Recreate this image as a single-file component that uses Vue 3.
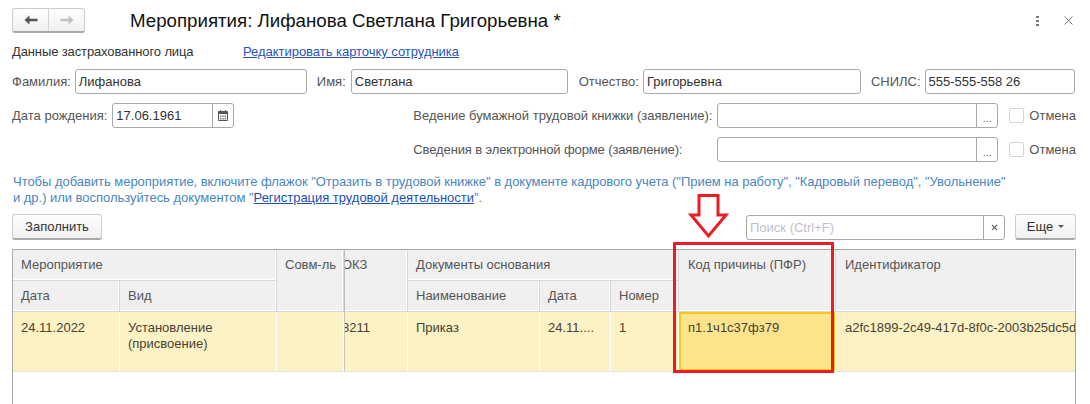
<template>
  <div class="page">
    <header class="top">
      <div class="nav">
        <button class="nav-btn"><svg width="14" height="10" viewBox="0 0 14 10"><path d="M0.5 5 L5.5 0.5 V3.7 H13.5 V6.3 H5.5 V9.5 Z" fill="#555"/></svg></button>
        <button class="nav-btn off"><svg width="14" height="10" viewBox="0 0 14 10"><path d="M13.5 5 L8.5 0.5 V3.7 H0.5 V6.3 H8.5 V9.5 Z" fill="#c2c2c2"/></svg></button>
      </div>
      <h1 class="title">Мероприятия: Лифанова Светлана Григорьевна *</h1>
      <div class="dots"><i></i><i></i><i></i></div>
      <svg class="close" width="9" height="9" viewBox="0 0 9 9"><path d="M0.5 0.5 L8.5 8.5 M8.5 0.5 L0.5 8.5" stroke="#777" stroke-width="1" fill="none"/></svg>
    </header>

    <div class="row r-head">
      <span class="lab dark w-head">Данные застрахованного лица</span>
      <a class="link">Редактировать карточку сотрудника</a>
    </div>

    <div class="row r-names">
      <span class="lab">Фамилия:</span><div class="inp w1">Лифанова</div>
      <span class="lab l2">Имя:</span><div class="inp w2">Светлана</div>
      <span class="lab l3">Отчество:</span><div class="inp w3">Григорьевна</div>
      <span class="lab l4">СНИЛС:</span><div class="inp w4">555-555-558 26</div>
    </div>

    <div class="row r-birth">
      <span class="lab">Дата рождения:</span>
      <div class="inp date"><span class="val">17.06.1961</span>
        <span class="side">
          <svg width="10" height="11" viewBox="0 0 10 11"><path d="M0.5 1.5 H9.5 V10.5 H0.5 Z" fill="none" stroke="#555"/><path d="M0 2 H10 V4 H0 Z M2 0 H3 V2 H2 Z M7 0 H8 V2 H7 Z" fill="#555"/><path d="M2 5.5 H3.5 V7 H2 Z M4.3 5.5 H5.8 V7 H4.3 Z M6.6 5.5 H8 V7 H6.6 Z M2 8 H3.5 V9.5 H2 Z M4.3 8 H5.8 V9.5 H4.3 Z M6.6 8 H8 V9.5 H6.6 Z" fill="#777"/></svg>
        </span>
      </div>
      <div class="paper">
        <span class="lab wide">Ведение бумажной трудовой книжки (заявление):</span>
        <div class="inp pick"><span class="val"></span><span class="side more">...</span></div>
        <span class="check"></span><span class="lab">Отмена</span>
      </div>
    </div>

    <div class="row r-elec">
      <span class="lab wide tight">Сведения в электронной форме (заявление):</span>
      <div class="inp pick"><span class="val"></span><span class="side more">...</span></div>
      <span class="check"></span><span class="lab">Отмена</span>
    </div>

    <p class="info">Чтобы добавить мероприятие, включите флажок "Отразить в трудовой книжке" в документе кадрового учета ("Прием на работу", "Кадровый перевод", "Увольнение"<br>и др.) или воспользуйтесь документом "<a class="link strong">Регистрация трудовой деятельности</a>".</p>

    <div class="row bar">
      <button class="btn fill">Заполнить</button>
      <div class="inp search"><span class="val ph">Поиск (Ctrl+F)</span>
        <span class="side x"><svg width="7" height="7" viewBox="0 0 7 7"><path d="M1 1 L6 6 M6 1 L1 6" stroke="#666" stroke-width="1.1"/></svg></span>
      </div>
      <button class="btn more-btn">Еще <i class="caret"></i></button>
    </div>

    <div class="table">
      <div class="c h g-m">Мероприятие</div>
      <div class="c h g-s">Совм-ль</div>
      <div class="c h g-o"><span class="cut">ОКЗ</span></div>
      <div class="c h g-d">Документы основания</div>
      <div class="c h g-k">Код причины (ПФР)</div>
      <div class="c h g-i">Идентификатор</div>
      <div class="c h sub">Дата</div>
      <div class="c h sub">Вид</div>
      <div class="c h sub">Наименование</div>
      <div class="c h sub">Дата</div>
      <div class="c h sub">Номер</div>
      <div class="c d">24.11.2022</div>
      <div class="c d">Установление (присвоение)</div>
      <div class="c d"></div>
      <div class="c d o"><span class="cut">8211</span></div>
      <div class="c d">Приказ</div>
      <div class="c d">24.11....</div>
      <div class="c d">1</div>
      <div class="c d sel">п1.1ч1с37фз79</div>
      <div class="c d id">a2fc1899-2c49-417d-8f0c-2003b25dc5d0</div>
    </div>

    <div class="mark"></div>
    <svg class="arrow" width="41" height="45" viewBox="0 0 41 45"><path d="M11 1.5 H30 V21 H38 L20.5 42 L3 21 H11 Z" fill="#fff" stroke="#ed1c24" stroke-width="3"/></svg>
  </div>
</template>

<script setup>
</script>

<style>
html, body { margin: 0; background: #fff; overflow: hidden; }
</style>

<style scoped>
.page { position: relative; width: 1090px; height: 404px; overflow: hidden; box-sizing: border-box; padding: 8px 14px 0 12px; font: 13px/16px "Liberation Sans", Arial, sans-serif; color: #4a4a4a; background: #fff; }
.top { display: flex; align-items: center; height: 25px; }
.nav { display: flex; flex: none; width: 73px; height: 25px; box-sizing: border-box; border: 1px solid #cdcdcd; border-bottom: 2px solid #a8a8a8; border-radius: 3px; background: linear-gradient(#fefefe, #f0f0f0); }
.nav-btn { flex: 1; border: 0; padding: 0; background: none; display: flex; align-items: center; justify-content: center; }
.nav-btn.off { border-left: 1px solid #d4d4d4; }
.title { margin: 0 0 0 45px; font: 400 18.7px/24px "Liberation Sans", Arial, sans-serif; color: #111; flex: 1; white-space: nowrap; }
.dots { display: flex; flex-direction: column; gap: 2px; margin-right: 25px; }
.dots i { width: 3px; height: 2px; background: #777; }
.close { margin-right: 3px; }
.row { display: flex; align-items: center; }
.lab { white-space: nowrap; color: #555; flex: none; }
.dark { color: #333; letter-spacing: -0.12px; }
.r-head { height: 16px; margin-top: 11px; }
.w-head { width: 231px; }
.link { color: #1f55b8; text-decoration: underline; letter-spacing: -0.03px; }
.r-names { margin-top: 9px; height: 25px; }
.inp { box-sizing: border-box; flex: none; height: 25px; border: 1px solid #a9a9a9; border-radius: 3px; background: #fff; color: #333; line-height: 23px; padding-left: 3px; margin-left: 4px; white-space: nowrap; display: flex; }
.w1 { width: 232px; }
.l2 { margin-left: 10px; }
.w2 { width: 217px; margin-left: 5px; }
.l3 { margin-left: 11px; }
.w3 { width: 218px; }
.l4 { margin-left: 10px; }
.w4 { width: 150px; }
.r-birth { margin-top: 9px; height: 25px; }
.date { width: 122px; padding: 0; margin-left: 5px; }
.val { flex: 1; padding-left: 3px; overflow: hidden; }
.side { border-left: 1px solid #a9a9a9; width: 20px; flex: none; display: flex; align-items: center; justify-content: center; }
.more { line-height: 30px; font-size: 11px; color: #666; padding-top: 4px; box-sizing: content-box; height: 19px; }
.paper { display: flex; align-items: center; margin-left: auto; flex: none; }
.wide { width: 298px; }
.tight { letter-spacing: -0.12px; }
.pick { width: 281px; padding: 0; margin-left: 6px; }
.check { box-sizing: border-box; width: 15px; height: 15px; border: 1px solid #d4d4d4; border-radius: 2px; margin: 0 5px 0 11px; background: #fff; flex: none; }
.r-elec { margin-top: 9px; height: 25px; justify-content: flex-end; }
.info { margin: 12px 0 0 1px; color: #4a86c0; line-height: 16px; white-space: nowrap; height: 32px; letter-spacing: -0.033px; }
.strong { color: #1c4fb5; }
.bar { margin-top: 8px; height: 26px; }
.btn { box-sizing: border-box; flex: none; height: 26px; border: 1px solid #cdcdcd; border-bottom: 2px solid #a8a8a8; border-radius: 3px; background: linear-gradient(#fefefe, #f0f0f0); font: 13px/16px "Liberation Sans", Arial, sans-serif; color: #333; padding: 0; }
.fill { width: 90px; }
.search { width: 259px; padding: 0; margin-left: 644px; }
.ph { color: #c0bfcc; }
.more-btn { width: 61px; margin-left: 10px; display: flex; align-items: center; justify-content: center; gap: 5px; }
.caret { width: 0; height: 0; border: 3px solid transparent; border-top: 3px solid #555; border-bottom: 0; }
.table { box-sizing: border-box; margin-top: 9px; width: 1064px; height: 160px; border: 1px solid #a9a9a9; border-bottom: 0; overflow: hidden; display: grid; grid-template-columns: 107px 157px 67px 64px 132px 71px 68px 157px 239px; grid-template-rows: 31px 31px 60px; }
.c { box-sizing: border-box; padding: 0 8px; overflow: hidden; }
.h { background: #f0f0f0; color: #555; border-right: 1px solid #d8d8d8; border-bottom: 1px solid #d8d8d8; box-shadow: inset -1px -1px 0 #fff; padding-top: 7px; white-space: nowrap; }
.sub { padding-top: 7px; }
.g-m { grid-column: 1 / 3; grid-row: 1; }
.g-s { grid-column: 3; grid-row: 1 / 3; }
.g-o { grid-column: 4; grid-row: 1 / 3; padding-left: 0; border-left: 1px solid #bdbdbd; }
.g-d { grid-column: 5 / 8; grid-row: 1; }
.g-k { grid-column: 8; grid-row: 1 / 3; padding-left: 9px; }
.g-i { grid-column: 9; grid-row: 1 / 3; border-right: 0; padding-left: 9px; }
.cut { display: block; margin-left: -3px; white-space: nowrap; }
.d { background: #fdf2c3; color: #4a4035; border-right: 1px solid #fff; border-bottom: 1px solid #e2e2e2; padding-top: 8px; line-height: 16px; }
.o { padding-left: 0; border-left: 1px solid #c4c4c4; }
.sel { background: #fde48c; box-shadow: inset 0 0 0 2px #f9c613; padding-left: 9px; }
.id { white-space: nowrap; border-right: 0; padding: 8px 0 0 9px; }
.mark { position: absolute; left: 673px; top: 242px; width: 161px; height: 131px; box-sizing: border-box; border: 3px solid #ed1c24; }
.arrow { position: absolute; left: 688px; top: 194px; }
</style>
